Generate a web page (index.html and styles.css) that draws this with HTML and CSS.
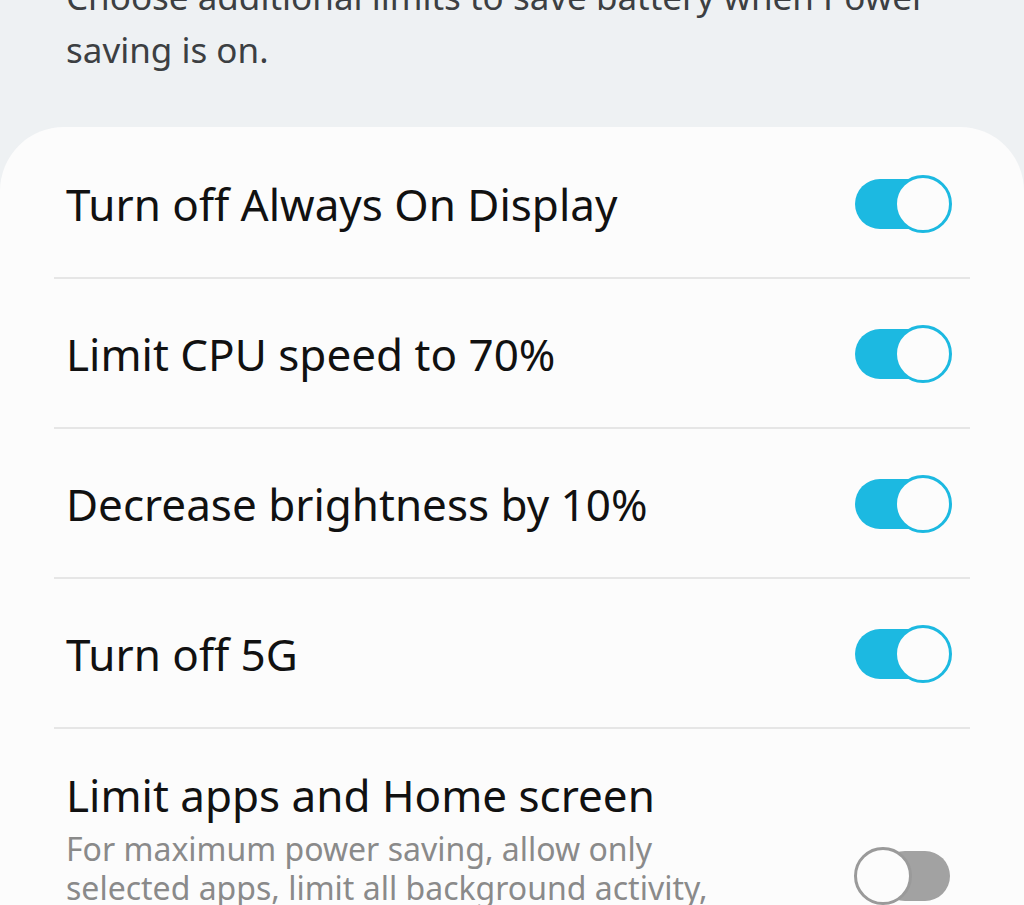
FILE: index.html
```html
<!DOCTYPE html>
<html>
<head>
<meta charset="utf-8">
<link rel="stylesheet" href="styles.css">
</head>
<body>
<p class="intro">Choose additional limits to save battery when Power saving is on.</p>
<div class="card">
  <div class="row">
    <span class="title">Turn off Always On Display</span>
    <span class="switch on"></span>
  </div>
  <div class="row">
    <span class="title">Limit CPU speed to 70%</span>
    <span class="switch on"></span>
  </div>
  <div class="row">
    <span class="title">Decrease brightness by 10%</span>
    <span class="switch on"></span>
  </div>
  <div class="row">
    <span class="title">Turn off 5G</span>
    <span class="switch on"></span>
  </div>
  <div class="row tall">
    <div class="texts">
      <div class="title">Limit apps and Home screen</div>
      <div class="desc">For maximum power saving, allow only selected apps, limit all background activity, and use a simplified Home screen.</div>
    </div>
    <span class="switch off"></span>
  </div>
</div>
</body>
</html>
```
FILE: styles.css
```css
html, body {
  margin: 0;
  padding: 0;
  background: #eef1f3;
  font-family: "Noto Sans", "Open Sans", sans-serif;
  overflow: hidden;
}
.intro {
  margin: -30px 0 0 0;
  padding: 0 60px 0 66px;
  font-size: 35px;
  line-height: 53px;
  color: #3c3f42;
}
.card {
  margin-top: 51px;
  background: #fcfcfc;
  border-radius: 64px 64px 0 0;
  padding: 2px 54px 0;
  min-height: 900px;
}
.row {
  display: flex;
  align-items: center;
  justify-content: space-between;
  border-bottom: 2px solid #e6e6e6;
  padding: 2px 18px 0 12px;
  box-sizing: border-box;
  height: 150px;
}
.title {
  font-size: 44px;
  color: #111;
  line-height: 60px;
}
.row.tall {
  align-items: flex-start;
  border-bottom: none;
  height: auto;
  padding-top: 36px;
}
.texts {
  width: 660px;
}
.desc {
  font-size: 32px;
  line-height: 39px;
  color: #8a8a8a;
  margin-top: 4px;
}
.switch {
  position: relative;
  flex: none;
  width: 98px;
  height: 58px;
}
.switch::before {
  content: "";
  position: absolute;
  left: 1px;
  right: 6px;
  top: 4px;
  height: 50px;
  border-radius: 25px;
  background: #1cb9e1;
}
.switch::after {
  content: "";
  position: absolute;
  top: 0;
  width: 58px;
  height: 58px;
  box-sizing: border-box;
  border-radius: 50%;
  border: 3px solid #1cb9e1;
  background: #fcfcfc;
}
.switch.on::after { right: 0; }
.switch.off { margin-top: 82px; }
.switch.off::before { background: #a2a2a2; left: 26px; right: 2px; }
.switch.off::after { left: 0; border-color: #9a9a9a; }
```
